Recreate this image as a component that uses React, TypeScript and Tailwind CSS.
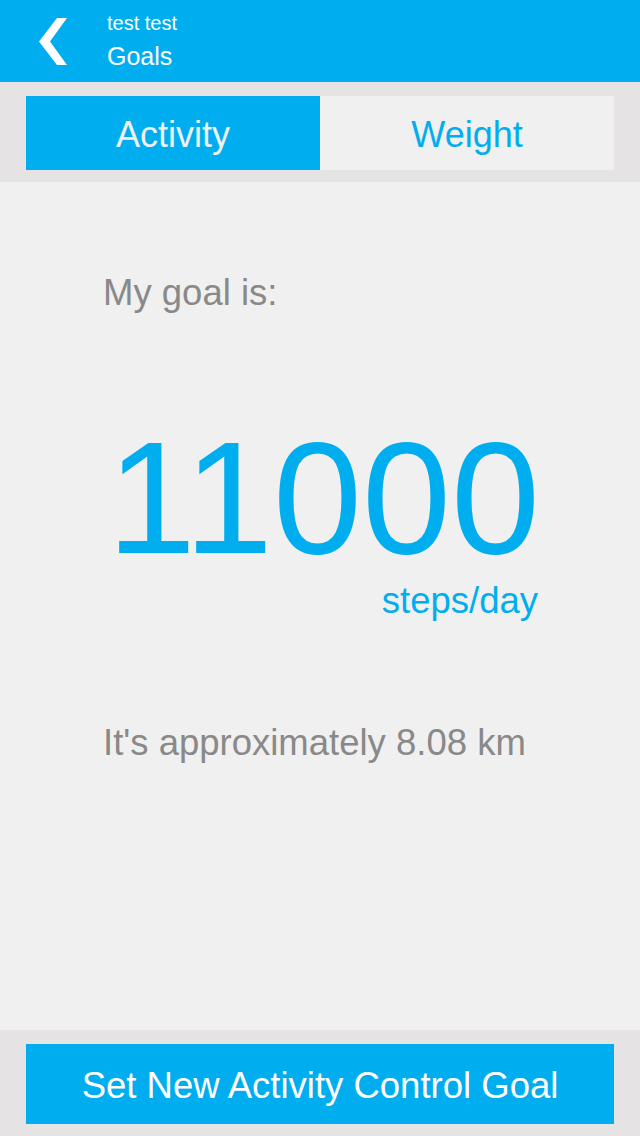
import { useState } from 'react';

type Tab = 'activity' | 'weight';

const font = { fontFamily: '"Liberation Sans", Arial, sans-serif' };

function BackChevron() {
    return (
        <svg width="30" height="48" viewBox="0 0 30 48" className="block">
            <polygon points="18,0 28,0 11,23.5 28,47 18,47 0,23.5" fill="#ffffff" />
        </svg>
    );
}

export default function App() {
    const [tab, setTab] = useState<Tab>('activity');
    const goal = 11000;
    const km = 8.08;

    return (
        <div className="flex flex-col h-[1136px] w-full bg-[#f0f0f0]" style={font}>
            <header className="flex h-[82px] bg-[#00aeef] text-white">
                <button className="pl-[39px] pt-[18px] w-[107px] flex items-start">
                    <BackChevron />
                </button>
                <div className="flex flex-col pt-[13px]">
                    <span className="text-[20px] leading-none">test test</span>
                    <span className="text-[25px] leading-none mt-[11px]">Goals</span>
                </div>
            </header>

            <div className="bg-[#e5e3e4] px-[26px] pt-[14px] pb-[12px]">
                <div className="flex h-[74px]">
                    <button
                        onClick={() => setTab('activity')}
                        className={`flex-1 flex items-center justify-center text-[36px] leading-none pt-[3px] ${
                            tab === 'activity' ? 'bg-[#00aeef] text-[#f0f0f0]' : 'bg-[#f0f0f0] text-[#00aeef]'
                        }`}
                    >
                        Activity
                    </button>
                    <button
                        onClick={() => setTab('weight')}
                        className={`flex-1 flex items-center justify-center text-[36px] leading-none pt-[3px] ${
                            tab === 'weight' ? 'bg-[#00aeef] text-[#f0f0f0]' : 'bg-[#f0f0f0] text-[#00aeef]'
                        }`}
                    >
                        Weight
                    </button>
                </div>
            </div>

            <main className="flex-1 flex flex-col pl-[103px] pr-[100px] pt-[93px]">
                <p className="text-[36.5px] leading-none text-[#898989]">My goal is:</p>
                <p className="mt-[116px] text-right text-[160px] leading-[140px] text-[#00aeef]">{goal}</p>
                <p className="mt-[15px] text-right text-[36.5px] leading-none text-[#00aeef] pr-[2px]">steps/day</p>
                <p className="mt-[106px] text-[36.5px] leading-none text-[#898989]">
                    It's approximately {km.toFixed(2)} km
                </p>
            </main>

            <div className="bg-[#e5e3e4] px-[26px] pt-[14px] pb-[12px]">
                <button className="w-full h-[80px] bg-[#00aeef] text-white text-[36.5px] leading-none pt-[4px] flex items-center justify-center">
                    Set New Activity Control Goal
                </button>
            </div>
        </div>
    );
}
